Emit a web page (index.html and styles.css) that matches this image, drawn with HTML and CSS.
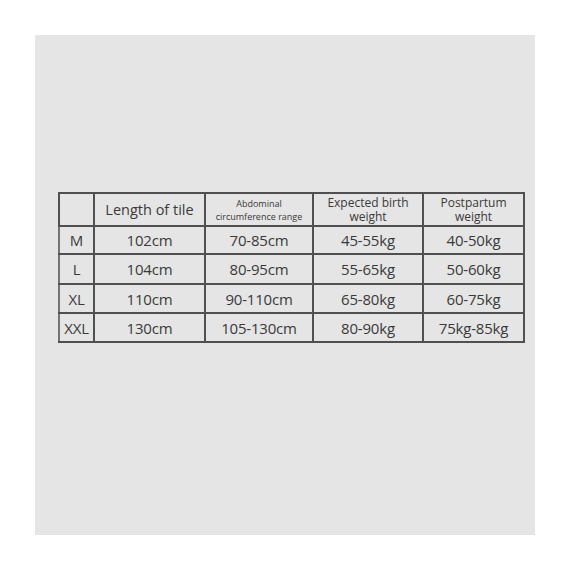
FILE: index.html
```html
<!DOCTYPE html>
<html>
<head>
<meta charset="utf-8">
<link rel="stylesheet" href="styles.css">
</head>
<body>
<div class="panel">
  <table class="sizes">
    <colgroup>
      <col class="c-size">
      <col class="c-len">
      <col class="c-abd">
      <col class="c-birth">
      <col class="c-post">
    </colgroup>
    <tr class="head">
      <th></th>
      <th class="big">Length of tile</th>
      <th class="tiny">Abdominal<br>circumference range</th>
      <th class="mid">Expected birth<br>weight</th>
      <th class="mid">Postpartum<br>weight</th>
    </tr>
    <tr class="r1"><td>M</td><td>102cm</td><td>70-85cm</td><td>45-55kg</td><td>40-50kg</td></tr>
    <tr class="r2"><td>L</td><td>104cm</td><td>80-95cm</td><td>55-65kg</td><td>50-60kg</td></tr>
    <tr class="r3"><td>XL</td><td>110cm</td><td>90-110cm</td><td>65-80kg</td><td>60-75kg</td></tr>
    <tr class="r4"><td>XXL</td><td>130cm</td><td>105-130cm</td><td>80-90kg</td><td>75kg-85kg</td></tr>
  </table>
</div>
</body>
</html>
```

FILE: styles.css
```css
html, body {
  margin: 0;
  padding: 0;
  background: #ffffff;
}
body {
  width: 570px;
  height: 570px;
  padding: 35px;
  box-sizing: border-box;
}
.panel {
  width: 500px;
  height: 500px;
  background: #e5e5e5;
  box-sizing: border-box;
  padding: 157px 0 0 23px;
}
.sizes {
  border-collapse: collapse;
  table-layout: fixed;
  width: 465px;
  font-family: "Open Sans", "Noto Sans", sans-serif;
  color: #3a3a3a;
}
.c-size { width: 35px; }
.c-len { width: 111px; }
.c-abd { width: 108px; }
.c-birth { width: 110px; }
.c-post { width: 101px; }
.sizes th, .sizes td {
  border: 2px solid #505050;
  padding: 0;
  text-align: center;
  vertical-align: middle;
  font-weight: normal;
  white-space: nowrap;
  overflow: hidden;
}
.sizes td {
  font-size: 15px;
  letter-spacing: -0.2px;
}
.sizes td:first-child {
  border-left-color: #747474;
}
.head { height: 33px; }
.r1 { height: 28px; }
.r2 { height: 30px; }
.r3 { height: 29px; }
.r4 { height: 29px; }
.big { font-size: 14.5px; }
.mid { font-size: 12px; line-height: 14px; }
.tiny { font-size: 9px; line-height: 13px; }
```
